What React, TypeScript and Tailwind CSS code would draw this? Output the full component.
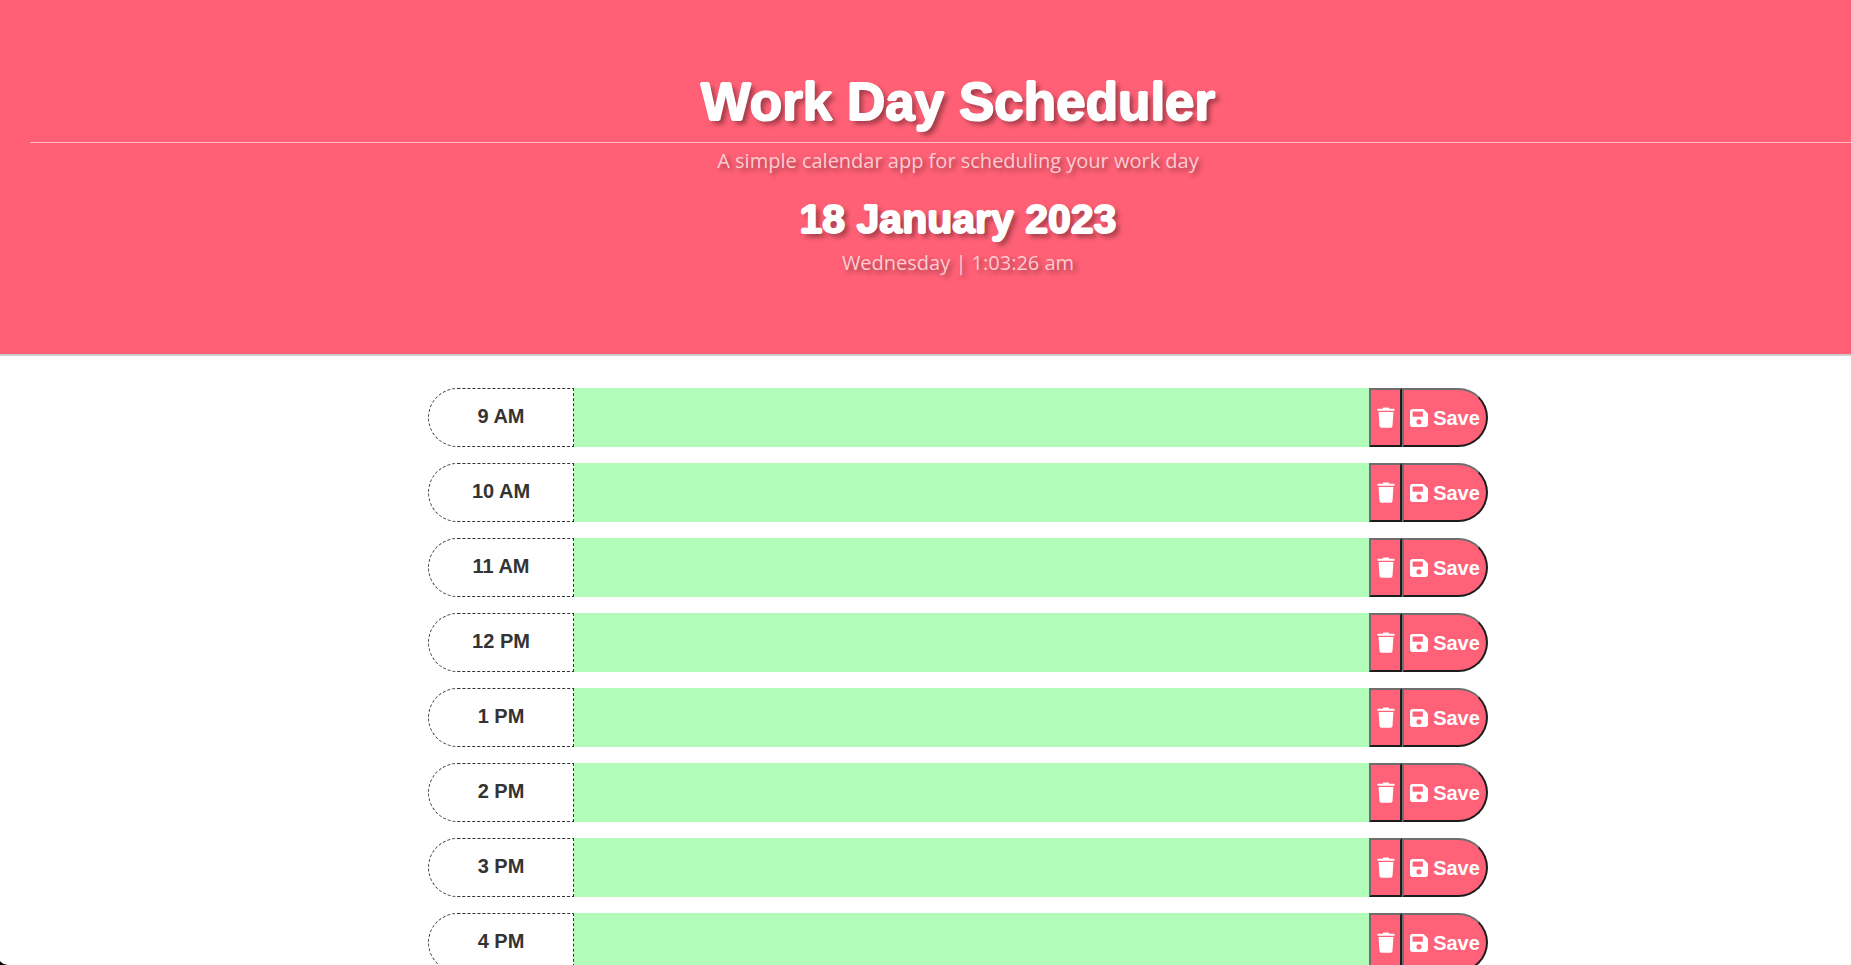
import { useState } from 'react';

const HOURS = ['9 AM', '10 AM', '11 AM', '12 PM', '1 PM', '2 PM', '3 PM', '4 PM'];

function TrashIcon() {
  return (
    <svg viewBox="0 0 18 21" className="h-[21px] w-[18px] shrink-0" fill="currentColor" aria-hidden="true">
      <path d="M6.4 0.6h5.2l.7 1.1h4.6a.7.7 0 0 1 .7.7v.9a.5.5 0 0 1-.5.5H.9a.5.5 0 0 1-.5-.5v-.9a.7.7 0 0 1 .7-.7h4.6z" />
      <path d="M1.6 5h14.8l-.9 14a1.9 1.9 0 0 1-1.9 1.7H4.4A1.9 1.9 0 0 1 2.5 19z" />
    </svg>
  );
}

function SaveIcon() {
  return (
    <svg viewBox="0 0 448 448" className="size-[18px] shrink-0" fill="currentColor" aria-hidden="true">
      <path
        fillRule="evenodd"
        d="M64 0C29 0 0 29 0 64v320c0 35 29 64 64 64h320c35 0 64-29 64-64V141c0-17-7-33-19-45l-77-77C340 7 324 0 307 0zm12 64h232c7 0 12 5 12 12v104c0 7-5 12-12 12H76c-7 0-12-5-12-12V76c0-7 5-12 12-12zm148 320a64 64 0 1 1 0-128 64 64 0 1 1 0 128z"
      />
    </svg>
  );
}

function TimeBlock({ hour }: { hour: string }) {
  const [text, setText] = useState('');
  const id = 'task-' + hour.replace(' ', '').toLowerCase();
  return (
    <li className="flex h-[59px]">
      <label
        htmlFor={id}
        className="flex w-[146px] shrink-0 justify-center rounded-l-[30px] border border-dashed border-[#333] pt-[13px] text-xl leading-7 font-bold text-[#333]"
      >
        {hour}
      </label>
      <textarea
        id={id}
        value={text}
        onChange={(e) => setText(e.target.value)}
        className="min-w-0 flex-1 resize-none bg-[#b2fcb9] p-2 text-base text-[#333] outline-none"
      />
      <button
        type="button"
        aria-label="Delete"
        onClick={() => setText('')}
        className="flex w-[33px] shrink-0 items-center justify-center border-2 border-t-[#6e6e6e] border-r-[#1c1c1c] border-b-[#1c1c1c] border-l-[#6e6e6e] bg-[#ff6178] text-white"
      >
        <TrashIcon />
      </button>
      <button
        type="button"
        className="flex w-[86px] shrink-0 items-center justify-center gap-[5px] rounded-r-[30px] border-2 border-t-[#6e6e6e] border-r-[#1c1c1c] border-b-[#1c1c1c] border-l-[#6e6e6e] bg-[#ff6178] text-xl font-bold text-white"
      >
        <SaveIcon />
        Save
      </button>
    </li>
  );
}

export default function App() {
  return (
    <div className="h-screen overflow-hidden bg-white font-['Liberation_Sans',Arial,sans-serif]">
      <header className="border-b-2 border-[#ccc] bg-[#ff6075] pt-[70px] pb-[77px] text-center text-white [text-shadow:3px_3px_5px_rgba(0,0,0,0.4)]">
        <h1 className="pl-[65px] text-[53px] leading-[64px] font-bold [text-shadow:1px_0_white,-1px_0_white,0_1px_white,0_-1px_white,4px_4px_5px_rgba(0,0,0,0.4)]">
          Work Day Scheduler
        </h1>
        <hr className="mt-2 ml-[30px] border-0 border-t border-[#ffb9c1]" />
        <p className="mt-1 pl-[65px] font-['Open_Sans',sans-serif] text-xl leading-7 text-[#ffcbd0]">
          A simple calendar app for scheduling your work day
        </p>
        <h2 className="mt-5 pl-[65px] text-[41px] leading-[48px] font-bold [text-shadow:1px_0_white,-1px_0_white,0_1px_white,0_-1px_white,4px_4px_5px_rgba(0,0,0,0.4)]">
          18 January 2023
        </h2>
        <p className="mt-[6px] pl-[65px] font-['Open_Sans',sans-serif] text-xl leading-7 text-[#ffcbd0]">
          Wednesday | 1:03:26 am
        </p>
      </header>
      <main className="pt-8 pl-[65px]">
        <ul className="mx-auto flex max-w-[1060px] flex-col gap-4">
          {HOURS.map((hour) => (
            <TimeBlock key={hour} hour={hour} />
          ))}
        </ul>
      </main>
      <svg className="fixed bottom-0 left-0 h-1 w-2" viewBox="0 0 8 4" aria-hidden="true">
        <path d="M0 0Q2.500 3.500 8 4H0z" fill="#000" />
      </svg>
    </div>
  );
}
